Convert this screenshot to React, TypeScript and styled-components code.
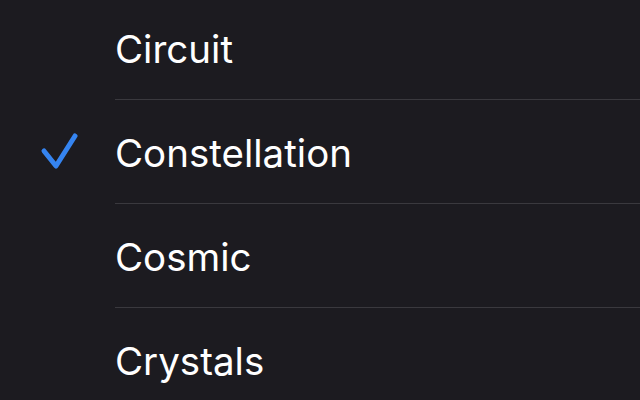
import React from "react";
import styled, { createGlobalStyle } from "styled-components";

const Global = createGlobalStyle`
  html, body { margin: 0; padding: 0; background: #1c1b20; overflow: hidden; }
  body { font-family: Inter, "Noto Sans", sans-serif; }
`;

const List = styled.div`
  width: 640px;
  height: 400px;
  overflow: hidden;
  background: #1c1b20;
`;

const Inner = styled.div`
  margin-top: -4px;
  display: flex;
  flex-direction: column;
`;

const Row = styled.div`
  display: flex;
  align-items: stretch;
  height: 104px;
`;

const CheckCell = styled.div`
  width: 115px;
  flex: none;
  display: flex;
  align-items: center;
  padding-left: 40px;
  box-sizing: border-box;
`;

const Content = styled.div<{ $last?: boolean }>`
  flex: 1;
  display: flex;
  align-items: center;
  border-bottom: 1px solid ${(p) => (p.$last ? "transparent" : "#3a393e")};
  box-sizing: border-box;
`;

const Label = styled.span`
  color: #ffffff;
  font-size: 38.5px;
  line-height: 1;
  padding-top: 4px;
`;

const Check = () => (
  <svg width="40" height="40" viewBox="0 0 40 40" fill="none">
    <path
      d="M4 19 L16 34 L35 4"
      stroke="#3584f0"
      strokeWidth="5"
      strokeLinecap="round"
      strokeLinejoin="round"
    />
  </svg>
);

const items = ["Circuit", "Constellation", "Cosmic", "Crystals"];

export default function App() {
  return (
    <>
      <Global />
      <List>
        <Inner>
          {items.map((it, i) => (
            <Row key={it}>
              <CheckCell>{it === "Constellation" && <Check />}</CheckCell>
              <Content $last={i === items.length - 1}>
                <Label>{it}</Label>
              </Content>
            </Row>
          ))}
        </Inner>
      </List>
    </>
  );
}
